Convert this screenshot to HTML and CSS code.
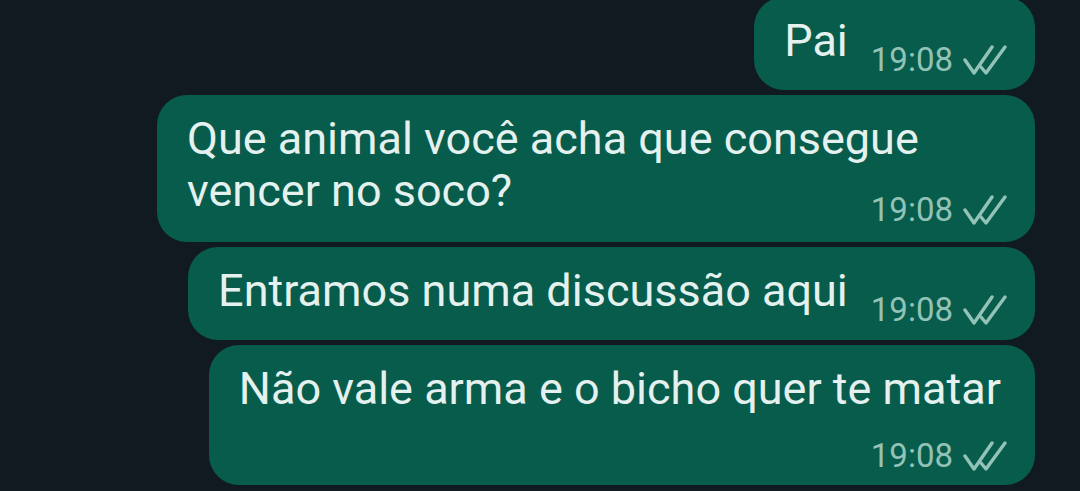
FILE: index.html
```html
<!DOCTYPE html>
<html lang="pt">
<head>
    <meta charset="UTF-8">
    <meta name="viewport" content="width=device-width, initial-scale=1.0">
    <title>Conversa</title>
    <link rel="stylesheet" href="styles.css">
</head>
<body>
    <div class="chat">
        <!-- mensagem curta: hora ao lado -->
        <div class="msg msg-row">
            <span class="text">Pai</span>
            <span class="meta">
                <span class="time">19:08</span>
                <svg class="ticks" viewBox="0 0 44 30" width="44" height="30">
                    <polyline points="2,15 11,28 29,2"/>
                    <polyline points="18,22 23,28 42,2"/>
                </svg>
            </span>
        </div>

        <div class="msg msg-stack">
            <div class="text">Que animal você acha que consegue vencer no soco?</div>
            <div class="meta pull">
                <span class="time">19:08</span>
                <svg class="ticks" viewBox="0 0 44 30" width="44" height="30">
                    <polyline points="2,15 11,28 29,2"/>
                    <polyline points="18,22 23,28 42,2"/>
                </svg>
            </div>
        </div>

        <div class="msg msg-row">
            <span class="text">Entramos numa discussão aqui</span>
            <span class="meta">
                <span class="time">19:08</span>
                <svg class="ticks" viewBox="0 0 44 30" width="44" height="30">
                    <polyline points="2,15 11,28 29,2"/>
                    <polyline points="18,22 23,28 42,2"/>
                </svg>
            </span>
        </div>

        <!-- linha cheia: hora vai para baixo -->
        <div class="msg msg-stack">
            <div class="text">Não vale arma e o bicho quer te matar</div>
            <div class="meta">
                <span class="time">19:08</span>
                <svg class="ticks" viewBox="0 0 44 30" width="44" height="30">
                    <polyline points="2,15 11,28 29,2"/>
                    <polyline points="18,22 23,28 42,2"/>
                </svg>
            </div>
        </div>
    </div>
</body>
</html>
```

FILE: styles.css
```css
/* base */
* {
    margin: 0;
    padding: 0;
    box-sizing: border-box;
}

body {
    background-color: #111a21;
    font-family: Roboto, "Noto Sans", sans-serif;
    height: 100vh;
    overflow: hidden;
}

.chat {
    display: flex;
    flex-direction: column;
    align-items: flex-end;
    gap: 5px;
    margin-top: -3px;
    padding-right: 45px;
}

/* balões */
.msg {
    background-color: #075c4b;
    color: #e4f1ee;
    border-radius: 30px;
    padding: 18px 28px 14px 30px;
    max-width: 878px;
    font-size: 45px;
    line-height: 52px;
}

.msg-row {
    display: flex;
    align-items: flex-start;
    gap: 23px;
    padding-bottom: 15px;
}

.msg-row .text {
    white-space: nowrap;
}

.msg-row .meta {
    margin-top: 30px;
}

.msg-stack {
    padding-right: 34px;
}

.msg-stack .meta {
    margin-top: 26px;
    margin-right: -6px;
}

.msg-stack .meta.pull {
    margin-top: -22px;
    margin-bottom: 3px;
}

/* hora + tiques */
.meta {
    display: flex;
    justify-content: flex-end;
    align-items: flex-start;
    gap: 10px;
    color: #93c2b7;
    font-size: 33px;
    line-height: 30px;
}

.ticks {
    fill: none;
    stroke: #93c2b7;
    stroke-width: 3.4;
    stroke-linecap: round;
    stroke-linejoin: round;
}
```
